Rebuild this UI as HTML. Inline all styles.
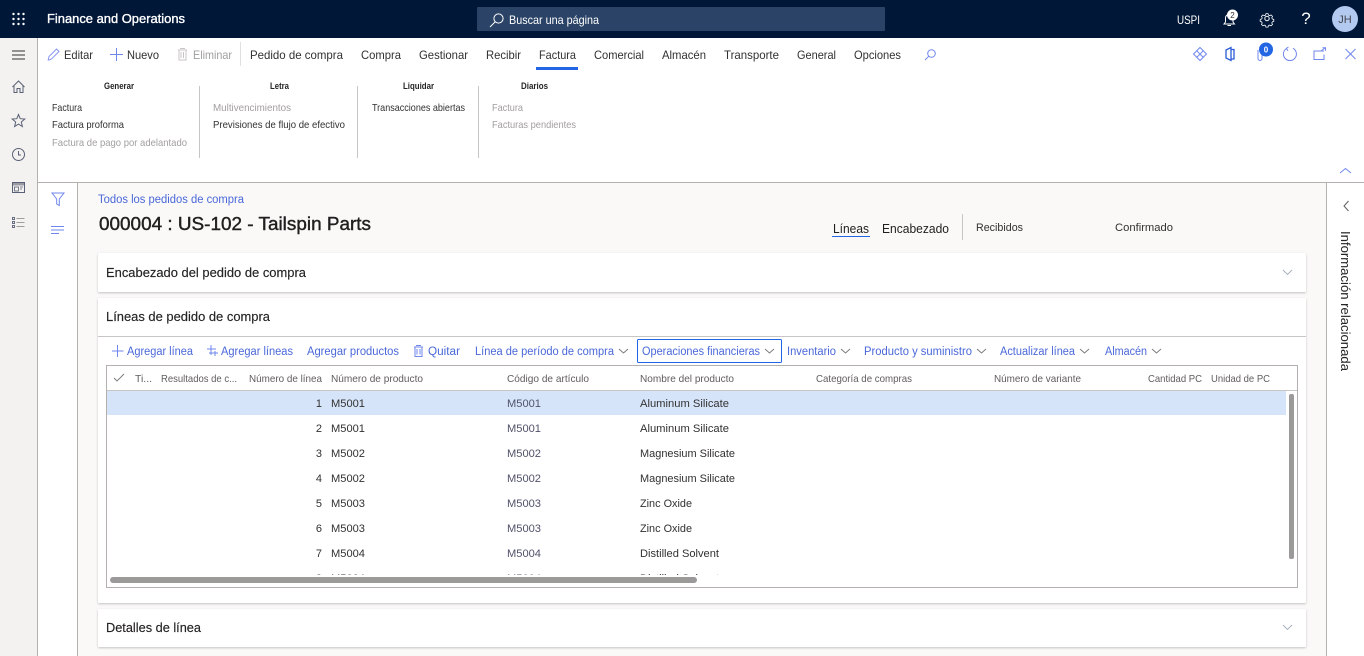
<!DOCTYPE html>
<html lang="es"><head><meta charset="utf-8"><title>Finance and Operations</title>
<style>
html,body{margin:0;padding:0;width:1364px;height:656px;overflow:hidden;background:#fff}
svg{display:block;font-family:"Liberation Sans",sans-serif}
text{white-space:pre}
.a{font-size:12px;fill:#323130}
.d{font-size:12px;fill:#a19f9d}
.h{font-size:9px;font-weight:bold;fill:#252423}
.r{font-size:10.5px;fill:#323130}
.rd{font-size:10.5px;fill:#a19f9d}
.t{font-size:11.5px;fill:#4a68d8}
.g{font-size:10.5px;fill:#605e5c}
.c{font-size:11px;fill:#323130}
.l{font-size:11px;fill:#50526a}
.s{font-size:13px;fill:#252423}
.i{fill:none;stroke:#6f86ee;stroke-width:1}
.n{fill:none;stroke:#323130;stroke-width:1}
.w{fill:none;stroke:#fff;stroke-width:1}
.v{fill:none;stroke:#7a7876;stroke-width:.9}
</style></head><body>
<svg width="1364" height="656" viewBox="0 0 1364 656" xmlns="http://www.w3.org/2000/svg">
<defs><clipPath id="gc"><rect x="107" y="391" width="1190" height="184"/></clipPath>
<filter id="sh" x="-2%" y="-10%" width="104%" height="125%"><feDropShadow dx="0" dy="1" stdDeviation="1" flood-color="#000" flood-opacity=".22"/></filter></defs>

<!-- top bar -->
<rect width="1364" height="38" fill="#001738"/>
<g fill="#fff"><circle cx="13.5" cy="14" r="1.2"/><circle cx="18.5" cy="14" r="1.2"/><circle cx="23.5" cy="14" r="1.2"/><circle cx="13.5" cy="19" r="1.2"/><circle cx="18.5" cy="19" r="1.2"/><circle cx="23.5" cy="19" r="1.2"/><circle cx="13.5" cy="24" r="1.2"/><circle cx="18.5" cy="24" r="1.2"/><circle cx="23.5" cy="24" r="1.2"/></g>
<text x="47" y="23" font-size="12.5" fill="#fff" stroke="#fff" stroke-width=".35" textLength="138" lengthAdjust="spacingAndGlyphs">Finance and Operations</text>
<rect x="477" y="7" width="408" height="24" rx="1" fill="#2a4366"/>
<circle cx="498.5" cy="18.5" r="4.6" class="w"/><path d="M495 22l-5 5" class="w"/>
<text x="509" y="24" font-size="12" fill="#fff" textLength="90" lengthAdjust="spacingAndGlyphs">Buscar una página</text>
<text x="1177" y="24" font-size="12" fill="#fff" textLength="23" lengthAdjust="spacingAndGlyphs">USPI</text>
<path d="M1224 24h10.500l-1.500-2v-4a3.700 3.700 0 0 0-7.500 0v4zM1227.500 25.500h3.500" class="w"/>
<circle cx="1232.500" cy="15" r="5.500" fill="#fff"/><text x="1232.500" y="18" font-size="8" text-anchor="middle" fill="#323130">2</text>
<g class="w"><circle cx="1267" cy="18.500" r="2.200"/><path d="M1265.700 12.200h2.600l.5 1.800 1.600.7 1.700-.9 1.800 1.800-.9 1.700.7 1.600 1.800.5v2.400l-1.800.6-.7 1.500.9 1.700-1.800 1.800-1.700-.9-1.600.7-.5 1.800h-2.600l-.5-1.800-1.600-.7-1.700.9-1.800-1.800.9-1.700-.7-1.500-1.800-.6v-2.400l1.800-.5.7-1.600-.9-1.700 1.800-1.800 1.700.9 1.600-.7z" transform="translate(253.400 3.900) scale(.8)"/></g>
<text x="1306" y="24" font-size="17" fill="#fff" text-anchor="middle">?</text>
<circle cx="1345" cy="19" r="13" fill="#b4c9f0"/><text x="1345" y="23" font-size="11" text-anchor="middle" fill="#44464f">JH</text>

<!-- left nav -->
<rect x="0" y="38" width="37" height="618" fill="#f3f2f1"/>
<rect x="37" y="38" width="1" height="618" fill="#b3b0ad"/>
<path d="M12 51h13M12 55h13M12 59h13" class="n"/>
<path d="M12.500 87l6-6 6 6M14 86v6.500h3v-4h3v4h3V86" fill="none" stroke="#5a6075" stroke-width="1"/>
<path d="M18.500 114.500l1.700 4.200 4.600.3-3.500 3 1.100 4.500-3.900-2.400-3.900 2.400 1.100-4.500-3.500-3 4.600-.3z" fill="none" stroke="#5a6075" stroke-width="1"/>
<circle cx="18.500" cy="154.500" r="6" fill="none" stroke="#5a6075"/><path d="M18.500 151v4h2.500" fill="none" stroke="#5a6075"/>
<rect x="12.500" y="182.500" width="12" height="10" fill="none" stroke="#5a6075"/><rect x="13" y="183" width="11" height="2.500" fill="#9a9aa5"/><rect x="14.500" y="187" width="4" height="4" fill="none" stroke="#5a6075" stroke-width=".8"/><path d="M20 187h3M20 189h2" stroke="#5a6075" stroke-width=".8"/>
<g fill="none" stroke="#5a6075" stroke-width=".9"><rect x="12.500" y="217.500" width="2" height="2"/><rect x="12.500" y="221.500" width="2" height="2"/><rect x="12.500" y="225.500" width="2" height="2"/><path d="M16.500 218.500h8M16.500 222.500h8M16.500 226.500h8" stroke="#a09e9c"/></g>

<!-- action bar -->
<path d="M49 60l-.8 0 .8-3.500 7.500-7.500 2.500 2.500-7.500 7.500z" fill="none" stroke="#8a97f0"/>
<text x="64" y="59" class="a" textLength="29" lengthAdjust="spacingAndGlyphs">Editar</text>
<path d="M116.500 48v13M110 54.500h13" class="i"/>
<text x="127" y="59" class="a" textLength="32" lengthAdjust="spacingAndGlyphs">Nuevo</text>
<path d="M178 50h9M180 48.500h5M179 50v10h7V50M181 52v6M183.500 52v6" fill="none" stroke="#c8c6c4"/>
<text x="193" y="59" class="d" textLength="39" lengthAdjust="spacingAndGlyphs">Eliminar</text>
<rect x="240" y="42" width="1" height="24" fill="#e1dfdd"/>
<text x="250" y="59" class="a" textLength="93" lengthAdjust="spacingAndGlyphs">Pedido de compra</text>
<text x="361" y="59" class="a" textLength="40" lengthAdjust="spacingAndGlyphs">Compra</text>
<text x="419" y="59" class="a" textLength="49" lengthAdjust="spacingAndGlyphs">Gestionar</text>
<text x="486" y="59" class="a" textLength="35" lengthAdjust="spacingAndGlyphs">Recibir</text>
<text x="539" y="59" class="a" textLength="37" lengthAdjust="spacingAndGlyphs">Factura</text>
<rect x="536" y="67" width="42" height="3" fill="#2266e3"/>
<text x="594" y="59" class="a" textLength="50" lengthAdjust="spacingAndGlyphs">Comercial</text>
<text x="662" y="59" class="a" textLength="44" lengthAdjust="spacingAndGlyphs">Almacén</text>
<text x="724" y="59" class="a" textLength="55" lengthAdjust="spacingAndGlyphs">Transporte</text>
<text x="797" y="59" class="a" textLength="39" lengthAdjust="spacingAndGlyphs">General</text>
<text x="854" y="59" class="a" textLength="47" lengthAdjust="spacingAndGlyphs">Opciones</text>
<circle cx="931.500" cy="53.500" r="3.800" class="i"/><path d="M928.700 56.300l-3.700 3.700" class="i"/>

<path d="M1200 47.500l6.500 6.500-6.500 6.500-6.500-6.500zM1196.700 50.800l6.600 6.600M1203.300 50.800l-6.600 6.600" class="i"/>
<path d="M1226 50l5-2.500v13l-5-2.500zM1231 49.500h3v9.500h-3" fill="none" stroke="#2a5bd7" stroke-width="1.300"/>
<path d="M1258 50v8.500a2 2 0 0 0 4 0V52" class="i"/>
<circle cx="1266" cy="49.500" r="7" fill="#2266e3"/><text x="1266" y="52.500" font-size="8" font-weight="bold" text-anchor="middle" fill="#fff">0</text>
<path d="M1286.500 48.500a6.500 6.500 0 1 0 6.500 -.2M1286 48.500l2.500-1.500M1286.500 48.500l1.500 2.300" class="i"/>
<path d="M1324 51h-10v8.500h10v-5M1321 51l4-3M1322.500 47.700h3v3" class="i"/>
<path d="M1345.500 49l10 10M1355.500 49l-10 10" class="i"/>

<!-- ribbon -->
<text x="104" y="89" class="h" textLength="30" lengthAdjust="spacingAndGlyphs">Generar</text>
<text x="270" y="89" class="h" textLength="19" lengthAdjust="spacingAndGlyphs">Letra</text>
<text x="403" y="89" class="h" textLength="31" lengthAdjust="spacingAndGlyphs">Liquidar</text>
<text x="521" y="89" class="h" textLength="27" lengthAdjust="spacingAndGlyphs">Diarios</text>
<text x="52" y="111" class="r" textLength="30" lengthAdjust="spacingAndGlyphs">Factura</text>
<text x="52" y="128" class="r" textLength="72" lengthAdjust="spacingAndGlyphs">Factura proforma</text>
<text x="52" y="146" class="rd" textLength="135" lengthAdjust="spacingAndGlyphs">Factura de pago por adelantado</text>
<text x="213" y="111" class="rd" textLength="78" lengthAdjust="spacingAndGlyphs">Multivencimientos</text>
<text x="213" y="128" class="r" textLength="132" lengthAdjust="spacingAndGlyphs">Previsiones de flujo de efectivo</text>
<text x="372" y="111" class="r" textLength="93" lengthAdjust="spacingAndGlyphs">Transacciones abiertas</text>
<text x="492" y="111" class="rd" textLength="31" lengthAdjust="spacingAndGlyphs">Factura</text>
<text x="492" y="128" class="rd" textLength="84" lengthAdjust="spacingAndGlyphs">Facturas pendientes</text>
<rect x="199" y="86" width="1" height="72" fill="#c8c6c4"/>
<rect x="357" y="86" width="1" height="72" fill="#c8c6c4"/>
<rect x="478" y="86" width="1" height="72" fill="#c8c6c4"/>
<path d="M1340 173l5.500-4.500 5.500 4.500" class="i"/>
<rect x="38" y="182" width="1326" height="1" fill="#b3b0ad"/>

<!-- filter pane / content -->
<rect x="77" y="183" width="1" height="473" fill="#b3b0ad"/>
<rect x="78" y="183" width="1248" height="473" fill="#faf9f8"/>
<path d="M52 193h12l-4.700 6v6.500l-2.600-1.500v-5z" class="i"/>
<path d="M51 226.500h13M51 230h13M51 233.500h8" class="i"/>

<text x="98" y="203" class="t" textLength="146" lengthAdjust="spacingAndGlyphs">Todos los pedidos de compra</text>
<text x="99" y="230" font-size="18" fill="#201f1e" stroke="#201f1e" stroke-width=".4" textLength="272" lengthAdjust="spacingAndGlyphs">000004 : US-102 - Tailspin Parts</text>
<text x="833" y="233" font-size="12.500" fill="#201f1e" textLength="36" lengthAdjust="spacingAndGlyphs">Líneas</text>
<rect x="832" y="236" width="38" height="1" fill="#2266e3"/>
<text x="882" y="233" font-size="12.500" fill="#201f1e" textLength="67" lengthAdjust="spacingAndGlyphs">Encabezado</text>
<rect x="962" y="214" width="1" height="26" fill="#c8c6c4"/>
<text x="976" y="231" class="c" textLength="47" lengthAdjust="spacingAndGlyphs">Recibidos</text>
<text x="1115" y="231" class="c" textLength="58" lengthAdjust="spacingAndGlyphs">Confirmado</text>

<!-- right pane -->
<rect x="1326" y="183" width="1" height="473" fill="#b3b0ad"/>
<rect x="1327" y="183" width="37" height="473" fill="#fff"/>
<path d="M1348.500 201l-4.500 5 4.500 5" fill="none" stroke="#605e5c"/>
<text transform="translate(1341 231) rotate(90)" font-size="12.500" fill="#252423" textLength="140" lengthAdjust="spacingAndGlyphs">Información relacionada</text>

<!-- cards -->
<rect x="98" y="253" width="1208" height="39" rx="1" fill="#fff" filter="url(#sh)"/>
<rect x="98" y="298" width="1208" height="305" rx="1" fill="#fff" filter="url(#sh)"/>
<rect x="98" y="609" width="1208" height="38" rx="1" fill="#fff" filter="url(#sh)"/>
<text x="106" y="277" class="s" stroke="#252423" stroke-width=".15" textLength="200" lengthAdjust="spacingAndGlyphs">Encabezado del pedido de compra</text>
<path d="M1283 270l4.500 4.500 4.500-4.500" fill="none" stroke="#a4aeb9" stroke-width=".9"/>
<text x="106" y="321" class="s" stroke="#252423" stroke-width=".15" textLength="164" lengthAdjust="spacingAndGlyphs">Líneas de pedido de compra</text>
<text x="106" y="632" class="s" stroke="#252423" stroke-width=".15" textLength="95" lengthAdjust="spacingAndGlyphs">Detalles de línea</text>
<path d="M1283 625l4.500 4.500 4.500-4.500" fill="none" stroke="#a4aeb9" stroke-width=".9"/>
<rect x="98" y="336" width="1208" height="1" fill="#c8c6c4"/>

<!-- toolbar -->
<path d="M117.500 345v12M112 351h11.500" class="i"/>
<text x="127" y="355" class="t" textLength="66" lengthAdjust="spacingAndGlyphs">Agregar línea</text>
<path d="M207 349h9M211 345v10M209 353h9M215 351v5" class="i"/>
<text x="221" y="355" class="t" textLength="72" lengthAdjust="spacingAndGlyphs">Agregar líneas</text>
<text x="307" y="355" class="t" textLength="92" lengthAdjust="spacingAndGlyphs">Agregar productos</text>
<path d="M414 347h9M416 345.500h5M415 347v9.500h7V347M417 349v5.500M420 349v5.500" class="i"/>
<text x="428" y="355" class="t" textLength="32" lengthAdjust="spacingAndGlyphs">Quitar</text>
<text x="475" y="355" class="t" textLength="139" lengthAdjust="spacingAndGlyphs">Línea de período de compra</text>
<path d="M619 349l4.500 4 4.500-4" class="v"/>
<rect x="637.500" y="339.500" width="144" height="23" rx="1" fill="#fff" stroke="#2266e3"/>
<text x="642" y="355" class="t" textLength="118" lengthAdjust="spacingAndGlyphs">Operaciones financieras</text>
<path d="M765 349l4.500 4 4.500-4" class="v"/>
<text x="787" y="355" class="t" textLength="49" lengthAdjust="spacingAndGlyphs">Inventario</text>
<path d="M841 349l4.500 4 4.500-4" class="v"/>
<text x="864" y="355" class="t" textLength="108" lengthAdjust="spacingAndGlyphs">Producto y suministro</text>
<path d="M977 349l4.500 4 4.500-4" class="v"/>
<text x="1000" y="355" class="t" textLength="75" lengthAdjust="spacingAndGlyphs">Actualizar línea</text>
<path d="M1080 349l4.500 4 4.500-4" class="v"/>
<text x="1105" y="355" class="t" textLength="42" lengthAdjust="spacingAndGlyphs">Almacén</text>
<path d="M1152 349l4.500 4 4.500-4" class="v"/>

<!-- grid -->
<rect x="106.500" y="365.500" width="1191" height="222" fill="#fff" stroke="#b3b0ad"/>
<rect x="107" y="390" width="1190" height="1" fill="#c8c6c4"/>
<path d="M114 378l3 3 7-7" class="v"/>
<text x="135" y="382" class="g" textLength="17" lengthAdjust="spacingAndGlyphs">Ti...</text>
<text x="161" y="382" class="g" textLength="76" lengthAdjust="spacingAndGlyphs">Resultados de c...</text>
<text x="249" y="382" class="g" textLength="73" lengthAdjust="spacingAndGlyphs">Número de línea</text>
<text x="331" y="382" class="g" textLength="92" lengthAdjust="spacingAndGlyphs">Número de producto</text>
<text x="507" y="382" class="g" textLength="82" lengthAdjust="spacingAndGlyphs">Código de artículo</text>
<text x="640" y="382" class="g" textLength="94" lengthAdjust="spacingAndGlyphs">Nombre del producto</text>
<text x="816" y="382" class="g" textLength="96" lengthAdjust="spacingAndGlyphs">Categoría de compras</text>
<text x="994" y="382" class="g" textLength="87" lengthAdjust="spacingAndGlyphs">Número de variante</text>
<text x="1148" y="382" class="g" textLength="54" lengthAdjust="spacingAndGlyphs">Cantidad PC</text>
<text x="1211" y="382" class="g" textLength="59" lengthAdjust="spacingAndGlyphs">Unidad de PC</text>
<rect x="107" y="391" width="1179" height="24" fill="#d6e4fa"/>
<g clip-path="url(#gc)">
<text x="322" y="407" class="c" text-anchor="end">1</text><text x="331" y="407" class="c" textLength="34" lengthAdjust="spacingAndGlyphs">M5001</text><text x="507" y="407" class="l" textLength="34" lengthAdjust="spacingAndGlyphs">M5001</text><text x="640" y="407" class="c" textLength="89" lengthAdjust="spacingAndGlyphs">Aluminum Silicate</text>
<text x="322" y="432" class="c" text-anchor="end">2</text><text x="331" y="432" class="c" textLength="34" lengthAdjust="spacingAndGlyphs">M5001</text><text x="507" y="432" class="l" textLength="34" lengthAdjust="spacingAndGlyphs">M5001</text><text x="640" y="432" class="c" textLength="89" lengthAdjust="spacingAndGlyphs">Aluminum Silicate</text>
<text x="322" y="457" class="c" text-anchor="end">3</text><text x="331" y="457" class="c" textLength="34" lengthAdjust="spacingAndGlyphs">M5002</text><text x="507" y="457" class="l" textLength="34" lengthAdjust="spacingAndGlyphs">M5002</text><text x="640" y="457" class="c" textLength="95" lengthAdjust="spacingAndGlyphs">Magnesium Silicate</text>
<text x="322" y="482" class="c" text-anchor="end">4</text><text x="331" y="482" class="c" textLength="34" lengthAdjust="spacingAndGlyphs">M5002</text><text x="507" y="482" class="l" textLength="34" lengthAdjust="spacingAndGlyphs">M5002</text><text x="640" y="482" class="c" textLength="95" lengthAdjust="spacingAndGlyphs">Magnesium Silicate</text>
<text x="322" y="507" class="c" text-anchor="end">5</text><text x="331" y="507" class="c" textLength="34" lengthAdjust="spacingAndGlyphs">M5003</text><text x="507" y="507" class="l" textLength="34" lengthAdjust="spacingAndGlyphs">M5003</text><text x="640" y="507" class="c" textLength="52" lengthAdjust="spacingAndGlyphs">Zinc Oxide</text>
<text x="322" y="532" class="c" text-anchor="end">6</text><text x="331" y="532" class="c" textLength="34" lengthAdjust="spacingAndGlyphs">M5003</text><text x="507" y="532" class="l" textLength="34" lengthAdjust="spacingAndGlyphs">M5003</text><text x="640" y="532" class="c" textLength="52" lengthAdjust="spacingAndGlyphs">Zinc Oxide</text>
<text x="322" y="557" class="c" text-anchor="end">7</text><text x="331" y="557" class="c" textLength="34" lengthAdjust="spacingAndGlyphs">M5004</text><text x="507" y="557" class="l" textLength="34" lengthAdjust="spacingAndGlyphs">M5004</text><text x="640" y="557" class="c" textLength="79" lengthAdjust="spacingAndGlyphs">Distilled Solvent</text>
<text x="322" y="582" class="c" text-anchor="end">8</text><text x="331" y="582" class="c" textLength="34" lengthAdjust="spacingAndGlyphs">M5004</text><text x="507" y="582" class="l" textLength="34" lengthAdjust="spacingAndGlyphs">M5004</text><text x="640" y="582" class="c" textLength="79" lengthAdjust="spacingAndGlyphs">Distilled Solvent</text>
</g>
<rect x="110" y="577" width="587" height="6" rx="3" fill="#9b9a99"/>
<rect x="1289" y="394" width="5" height="165" rx="2" fill="#9b9a99"/>
</svg>
</body></html>
